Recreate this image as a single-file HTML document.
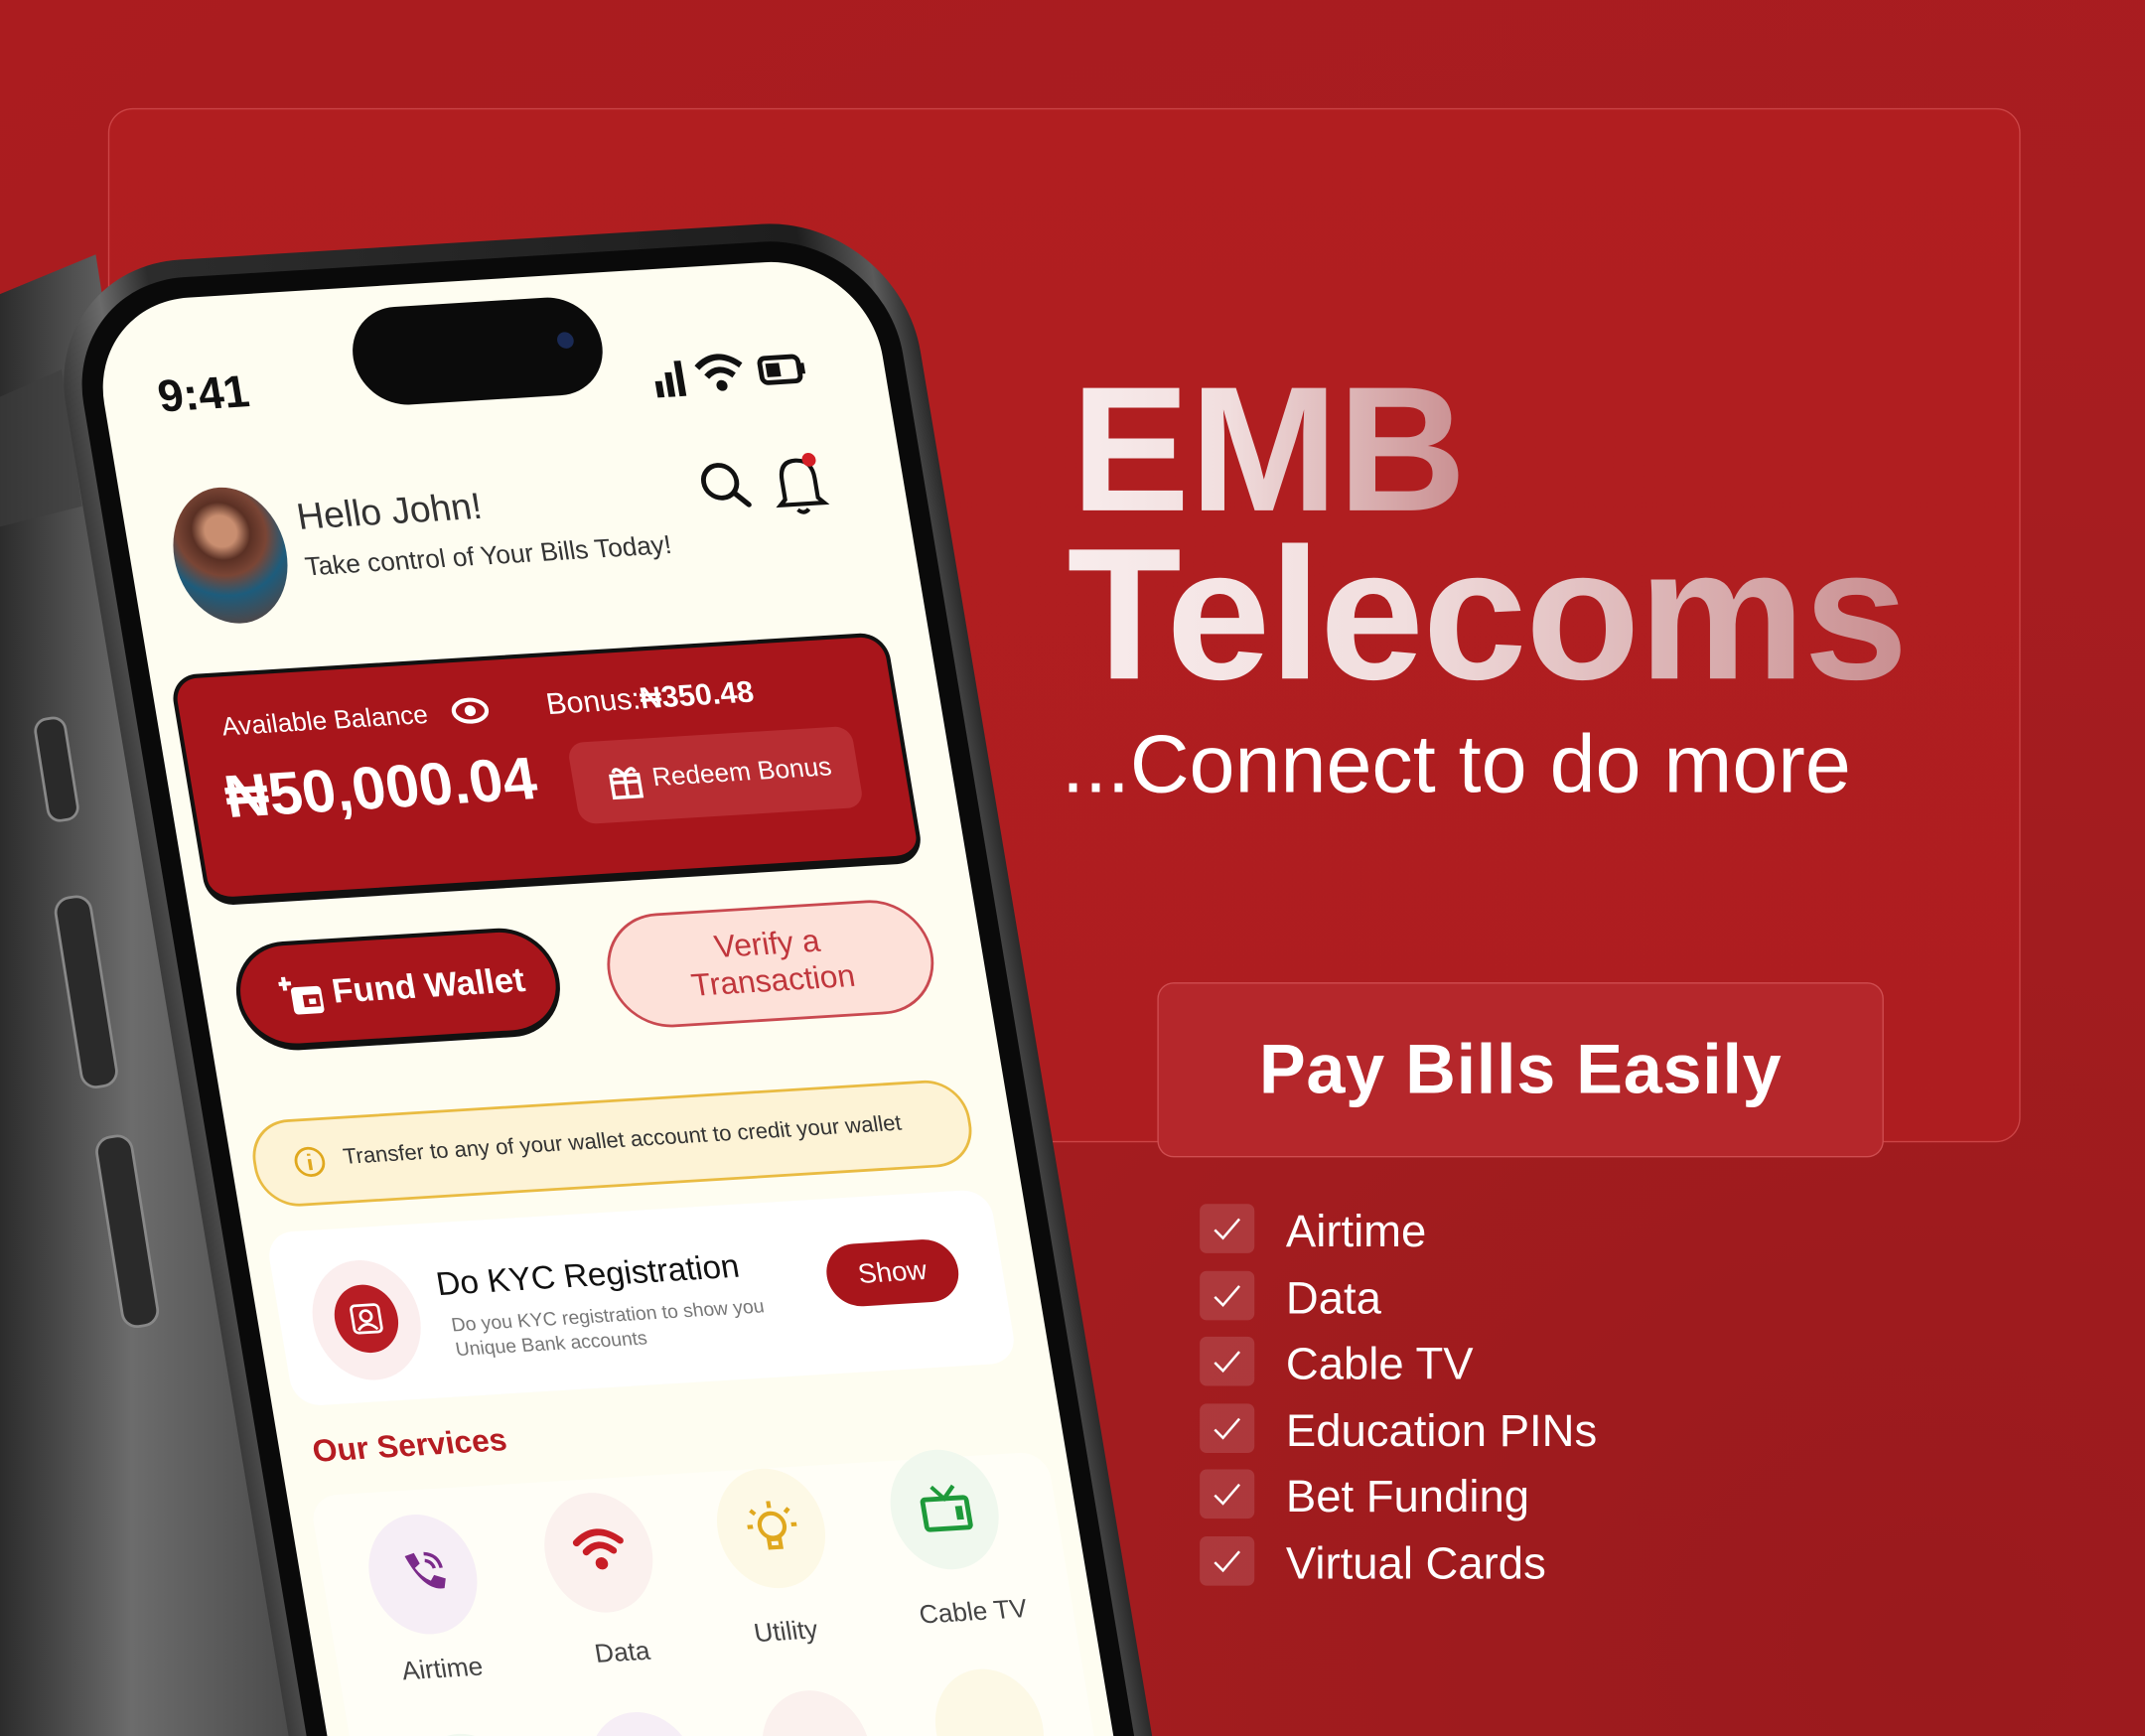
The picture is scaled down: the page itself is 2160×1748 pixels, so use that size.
<!DOCTYPE html>
<html style="overflow:hidden;width:2160px;height:1748px"><head><meta charset="utf-8"><style>
html,body{margin:0;padding:0;}
body{width:2160px;height:1748px;overflow:hidden;position:relative;background:#a51b1e;font-family:"Liberation Sans",sans-serif;}
#w{position:absolute;left:0;top:0;width:1568px;height:1269px;transform:scale(1.37755);transform-origin:0 0;overflow:hidden;
background:radial-gradient(ellipse at 90% 95%,#9a1a1d 0%,#a71d20 50%,#ab1c1f 100%);}
.abs{position:absolute;}
#panel{left:79px;top:79px;width:1398px;height:756px;border-radius:18px;background:linear-gradient(180deg,#b11e20,#ae1d20);border:1px solid rgba(255,140,140,0.35);box-sizing:border-box;}
.big{font-weight:bold;line-height:1;white-space:nowrap;color:transparent;background:linear-gradient(90deg,#f8ecec 0%,#f1dede 40%,#c98e90 100%);-webkit-background-clip:text;background-clip:text;}
#pb{left:846px;top:718px;width:531px;height:128px;border-radius:12px;background:#b5272b;border:1px solid rgba(255,150,150,0.35);box-sizing:border-box;color:#fff;font-weight:bold;font-size:51px;text-align:center;line-height:126px;letter-spacing:0.5px;}
.ck{position:absolute;left:877px;width:40px;height:36px;border-radius:5px;background:rgba(255,255,255,0.13);}
.ck svg{position:absolute;left:9px;top:7px;}
.cl{position:absolute;left:940px;color:#fff;font-size:33px;line-height:1;white-space:nowrap;}
#phone{left:64px;top:222px;width:570px;height:1250px;transform-origin:0 0;transform:rotate(-3.5deg) skewX(6deg);}
#frame{left:-28px;top:-28px;width:626px;height:1320px;border-radius:100px;background:linear-gradient(90deg,#3a3a3a,#6a6a6a 6%,#2c2c2c 12%,#1e1e1e 88%,#5a5a5a 96%,#2a2a2a);}
#bezel{left:-15px;top:-15px;width:600px;height:1290px;border-radius:88px;background:#0a0a0a;}
#screen{left:0;top:0;width:570px;height:1260px;border-radius:74px;background:#fefdf1;overflow:hidden;color:#222;}
#screen *{position:absolute;white-space:nowrap;}
</style></head><body><div id="w">
<div class="abs" id="panel"></div>

<svg class="abs" style="left:0;top:0" width="300" height="1269">
<defs><linearGradient id="sg" x1="0" x2="1"><stop offset="0" stop-color="#2c2c2c"/><stop offset=".4" stop-color="#6c6c6c"/><stop offset="1" stop-color="#444"/></linearGradient></defs>
<polygon points="0,215 70,186 240,1269 0,1269" fill="url(#sg)"/>
<polygon points="0,290 45,270 60,370 0,385" fill="#3d3d3d" opacity=".6"/>
<rect x="30" y="525" width="22" height="75" rx="9" fill="#2a2a2a" stroke="#888" stroke-width="2" transform="rotate(-9 40 560)"/>
<rect x="50" y="655" width="26" height="140" rx="11" fill="#2a2a2a" stroke="#888" stroke-width="2" transform="rotate(-9 63 725)"/>
<rect x="80" y="830" width="26" height="140" rx="11" fill="#2a2a2a" stroke="#888" stroke-width="2" transform="rotate(-9 93 900)"/>
</svg>

<div class="abs" id="phone">
<div class="abs" id="frame"></div>
<div class="abs" id="bezel"></div>
<div class="abs" id="screen">
 <div style="left:40px;top:52px;font-size:33px;font-weight:bold;color:#111">9:41</div>
 <div style="left:186px;top:16px;width:182px;height:72px;border-radius:36px;background:#0b0b0b"></div>
 <div style="left:336px;top:42px;width:12px;height:12px;border-radius:6px;background:#1a2a55"></div>
 <svg style="left:400px;top:62px" width="115" height="34" viewBox="0 0 115 34">
  <rect x="2" y="20" width="5" height="12" fill="#111"/><rect x="10" y="14" width="5" height="18" fill="#111"/><rect x="18" y="6" width="5" height="26" fill="#111"/>
  <path d="M34 12 Q50 -2 66 12" stroke="#111" stroke-width="4.5" fill="none"/><path d="M40 19 Q50 10 60 19" stroke="#111" stroke-width="4.5" fill="none"/><circle cx="50" cy="26" r="4" fill="#111"/>
  <rect x="80" y="8" width="28" height="18" rx="4" stroke="#111" stroke-width="3.5" fill="none"/><rect x="84" y="12" width="10" height="10" fill="#111"/><rect x="109" y="13" width="3" height="8" fill="#111"/>
 </svg>
 <div style="left:32px;top:140px;width:82px;height:100px;border-radius:50%;background:radial-gradient(circle at 45% 32%,#c98e70 0 14%,#5a3024 26%,#7a4535 40%,#1d5c7c 58%,#6b3a2a 100%);"></div>
 <div style="left:126px;top:150px;font-size:27px;color:#333">Hello John!</div>
 <div style="left:126px;top:192px;font-size:19px;color:#333">Take control of Your Bills Today!</div>
 <svg style="left:420px;top:138px" width="110" height="50" viewBox="0 0 110 50">
  <circle cx="17" cy="20" r="12" stroke="#111" stroke-width="3.5" fill="none"/><path d="M26 29 L35 38" stroke="#111" stroke-width="4" stroke-linecap="round"/>
  <path d="M62 36 L62 22 Q62 8 74 8 Q86 8 86 22 L86 36 L90 40 L58 40 Z" stroke="#111" stroke-width="3" fill="none"/><path d="M70 44 Q74 48 78 44" stroke="#111" stroke-width="3" fill="none"/><circle cx="84" cy="8" r="5" fill="#d41f26"/>
 </svg>
 <div style="left:14px;top:275px;width:525px;height:170px;border-radius:20px;background:#a8151b;border:3px solid #111;border-bottom-width:6px;box-sizing:border-box"></div>
 <div style="left:46px;top:305px;font-size:19px;color:#fff">Available Balance</div>
 <svg style="left:214px;top:303px" width="28" height="22" viewBox="0 0 28 22"><ellipse cx="14" cy="11" rx="12" ry="8" stroke="#fff" stroke-width="3" fill="none"/><circle cx="14" cy="11" r="4" fill="#fff"/></svg>
 <div style="left:40px;top:342px;font-size:44px;font-weight:bold;color:#fff">₦50,000.04</div>
 <div style="left:284px;top:300px;font-size:22px;color:#fff">Bonus: <b>₦350.48</b></div>
 <div style="left:294px;top:342px;width:208px;height:60px;border-radius:12px;background:#b82d32"></div>
 <svg style="left:320px;top:360px" width="24" height="26" viewBox="0 0 24 26"><rect x="2" y="8" width="20" height="16" stroke="#fff" stroke-width="2.5" fill="none"/><path d="M2 13 H22 M12 8 V24 M12 8 Q6 0 4 6 M12 8 Q18 0 20 6" stroke="#fff" stroke-width="2.5" fill="none"/></svg>
 <div style="left:352px;top:361px;font-size:19px;color:#fff">Redeem Bonus</div>
 <div style="left:24px;top:474px;width:236px;height:80px;border-radius:40px;background:#a8151b;border:3px solid #111;border-bottom-width:5px;box-sizing:border-box"></div>
 <svg style="left:56px;top:498px" width="34" height="34" viewBox="0 0 34 34"><path d="M4 2 V12 M-1 7 H9" stroke="#fff" stroke-width="3"/><rect x="8" y="10" width="22" height="20" rx="3" fill="#fff"/><rect x="16" y="16" width="12" height="9" fill="#a8151b"/><rect x="20" y="19" width="5" height="4" fill="#fff"/></svg>
 <div style="left:94px;top:499px;font-size:25px;font-weight:bold;color:#fff">Fund Wallet</div>
 <div style="left:296px;top:470px;width:238px;height:84px;border-radius:42px;background:#fde1d9;border:2px solid #c94950;box-sizing:border-box"></div>
 <div style="left:296px;top:484px;width:238px;text-align:center;font-size:23px;line-height:27px;color:#c0363c;white-space:normal">Verify a<br>Transaction</div>
 <div style="left:16px;top:604px;width:525px;height:64px;border-radius:30px;background:#fdf3d6;border:2px solid #e9bb42;box-sizing:border-box"></div>
 <svg style="left:44px;top:623px" width="26" height="26" viewBox="0 0 26 26"><circle cx="13" cy="13" r="10" stroke="#e0a81e" stroke-width="2" fill="none"/><path d="M13 11 V19 M13 7 V8.5" stroke="#e0a81e" stroke-width="2.5"/></svg>
 <div style="left:82px;top:626px;font-size:16px;color:#333">Transfer to any of your wallet account to credit your wallet</div>
 <div style="left:16px;top:686px;width:530px;height:128px;border-radius:20px;background:#fff"></div>
 <div style="left:40px;top:710px;width:78px;height:88px;border-radius:50%;background:#fbeeee"></div>
 <div style="left:56px;top:728px;width:46px;height:50px;border-radius:50%;background:#b81d24"></div>
 <svg style="left:66px;top:740px" width="26" height="26" viewBox="0 0 26 26"><rect x="3" y="3" width="20" height="20" rx="3" stroke="#fff" stroke-width="2" fill="none"/><circle cx="13" cy="11" r="4" stroke="#fff" stroke-width="2" fill="none"/><path d="M6 21 Q13 13 20 21" stroke="#fff" stroke-width="2" fill="none"/></svg>
 <div style="left:134px;top:718px;font-size:24px;color:#111">Do KYC Registration</div>
 <div style="left:140px;top:752px;font-size:14px;line-height:18px;color:#777;white-space:normal;width:260px">Do you KYC registration to show you Unique Bank accounts</div>
 <div style="left:418px;top:720px;width:96px;height:46px;border-radius:23px;background:#a8151b;color:#fff;font-size:20px;text-align:center;line-height:46px">Show</div>
 <div style="left:24px;top:834px;font-size:23px;font-weight:bold;color:#b51c22">Our Services</div>
 <div style="left:16px;top:880px;width:540px;height:400px;border-radius:20px;background:#fffef7"></div>
 <div style="left:50px;top:898px;width:78px;height:88px;border-radius:50%;background:#f6eef6"></div>
 <svg style="left:72px;top:922px" width="36" height="36" viewBox="0 0 36 36"><path d="M6 6 L13 4 L16 12 L12 15 Q16 22 22 25 L25 21 L33 24 L31 31 Q16 33 6 6 Z" fill="#7b2a8a"/><path d="M20 5 Q30 6 31 16 M20 10 Q25 11 26 16" stroke="#7b2a8a" stroke-width="2.5" fill="none"/></svg>
 <div style="left:62px;top:1002px;font-size:19px;color:#444">Airtime</div>
 <div style="left:180px;top:890px;width:78px;height:88px;border-radius:50%;background:#fbf1ee"></div>
 <svg style="left:200px;top:914px" width="40" height="36" viewBox="0 0 40 36"><path d="M4 12 Q20 -2 36 12" stroke="#c81e26" stroke-width="5" fill="none" stroke-linecap="round"/><path d="M10 19 Q20 10 30 19" stroke="#c81e26" stroke-width="5" fill="none" stroke-linecap="round"/><circle cx="20" cy="28" r="4.5" fill="#c81e26"/></svg>
 <div style="left:204px;top:998px;font-size:19px;color:#444">Data</div>
 <div style="left:308px;top:880px;width:78px;height:88px;border-radius:50%;background:#fdf9e6"></div>
 <svg style="left:328px;top:902px" width="40" height="44" viewBox="0 0 40 44"><circle cx="20" cy="20" r="9" stroke="#e0a81e" stroke-width="3" fill="none"/><path d="M16 30 H24 V36 H16 Z M20 2 V7 M6 8 L9 11 M34 8 L31 11 M2 20 H6 M34 20 H38" stroke="#e0a81e" stroke-width="3" fill="none"/></svg>
 <div style="left:322px;top:990px;font-size:19px;color:#444">Utility</div>
 <div style="left:436px;top:874px;width:78px;height:88px;border-radius:50%;background:#f0f8ee"></div>
 <svg style="left:456px;top:898px" width="40" height="40" viewBox="0 0 40 40"><rect x="4" y="12" width="32" height="22" rx="2" stroke="#1e9a3a" stroke-width="3.5" fill="none"/><path d="M12 3 L20 12 L28 3" stroke="#1e9a3a" stroke-width="3" fill="none"/><rect x="27" y="18" width="5" height="10" fill="#1e9a3a"/></svg>
 <div style="left:444px;top:984px;font-size:19px;color:#444">Cable TV</div>
 <div style="left:56px;top:1060px;width:78px;height:88px;border-radius:50%;background:#f0f8ee"></div>
 <div style="left:186px;top:1052px;width:78px;height:88px;border-radius:50%;background:#f6eef6"></div>
 <div style="left:314px;top:1044px;width:78px;height:88px;border-radius:50%;background:#fbf1ee"></div>
 <div style="left:442px;top:1036px;width:78px;height:88px;border-radius:50%;background:#fdf9e6"></div>
</div>
</div>

<div class="abs big" style="left:783px;top:263px;font-size:130px">EMB</div>
<div class="abs big" style="left:780px;top:381px;font-size:137px;letter-spacing:-1px">Telecoms</div>
<div class="abs" style="left:776px;top:529px;font-size:60px;line-height:1;color:#fff;white-space:nowrap">...Connect to do more</div>

<div class="abs" id="pb">Pay Bills Easily</div>

<div class="ck" style="top:880px"><svg width="22" height="22" viewBox="0 0 22 22"><path d="M2 12 L8 18 L20 4" stroke="#fff" stroke-width="1.8" fill="none"/></svg></div>
<div class="ck" style="top:929px"><svg width="22" height="22" viewBox="0 0 22 22"><path d="M2 12 L8 18 L20 4" stroke="#fff" stroke-width="1.8" fill="none"/></svg></div>
<div class="ck" style="top:977px"><svg width="22" height="22" viewBox="0 0 22 22"><path d="M2 12 L8 18 L20 4" stroke="#fff" stroke-width="1.8" fill="none"/></svg></div>
<div class="ck" style="top:1026px"><svg width="22" height="22" viewBox="0 0 22 22"><path d="M2 12 L8 18 L20 4" stroke="#fff" stroke-width="1.8" fill="none"/></svg></div>
<div class="ck" style="top:1074px"><svg width="22" height="22" viewBox="0 0 22 22"><path d="M2 12 L8 18 L20 4" stroke="#fff" stroke-width="1.8" fill="none"/></svg></div>
<div class="ck" style="top:1123px"><svg width="22" height="22" viewBox="0 0 22 22"><path d="M2 12 L8 18 L20 4" stroke="#fff" stroke-width="1.8" fill="none"/></svg></div>
<div class="cl" style="top:883px">Airtime</div>
<div class="cl" style="top:932px">Data</div>
<div class="cl" style="top:980px">Cable TV</div>
<div class="cl" style="top:1029px">Education PINs</div>
<div class="cl" style="top:1077px">Bet Funding</div>
<div class="cl" style="top:1126px">Virtual Cards</div>
</div></body></html>
